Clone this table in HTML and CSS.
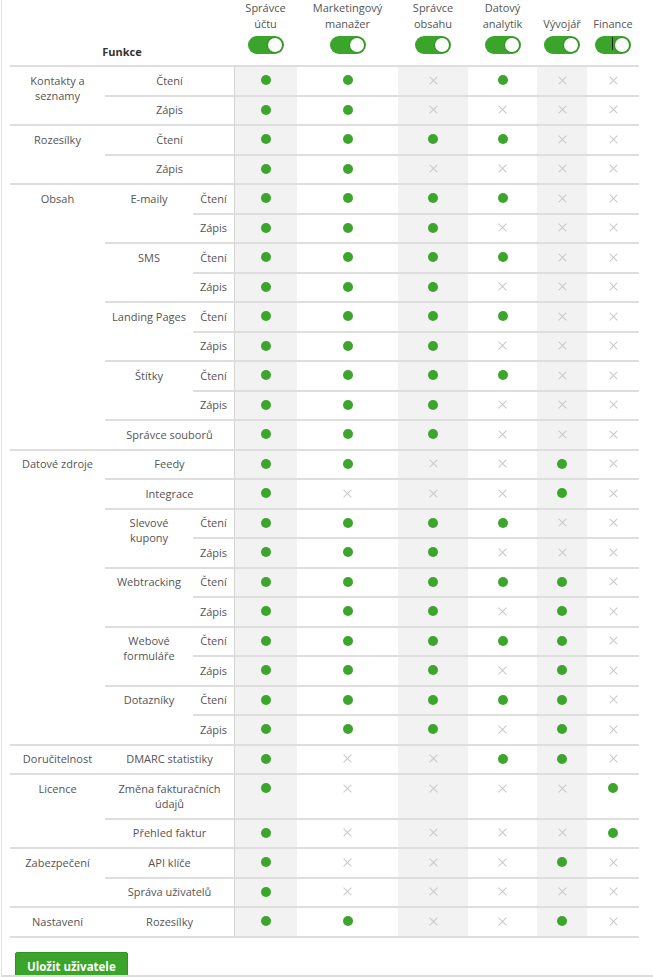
FILE: index.html
```html
<!DOCTYPE html>
<html lang="cs">
<head>
<meta charset="utf-8">
<title>Oprávnění rolí</title>
<link rel="stylesheet" href="styles.css">
</head>
<body>
<div class="page">
<table class="perm">
<colgroup>
<col class="w-grp"><col class="w-sub"><col class="w-act">
<col class="w-1"><col class="w-2"><col class="w-3"><col class="w-4"><col class="w-5"><col class="w-6">
</colgroup>
<thead>
<tr>
<th colspan="3" class="fn">Funkce</th>
<th><div class="role">Správce<br>účtu</div><span class="tg"><span class="kn"></span></span></th>
<th><div class="role">Marketingový<br>manažer</div><span class="tg"><span class="kn"></span></span></th>
<th><div class="role">Správce<br>obsahu</div><span class="tg"><span class="kn"></span></span></th>
<th><div class="role">Datový<br>analytik</div><span class="tg"><span class="kn"></span></span></th>
<th><div class="role">Vývojář</div><span class="tg"><span class="kn"></span></span></th>
<th><div class="role">Finance</div><span class="tg"><span class="kn"></span><span class="caret"></span></span></th>
</tr>
</thead>
<tbody>
<tr><td class="grp" rowspan="2">Kontakty a<br>seznamy</td><td class="sub" colspan="2">Čtení</td><td class="d d1"><i class="y"></i></td><td class="d d2"><i class="y"></i></td><td class="d d3"><i class="n"></i></td><td class="d d4"><i class="y"></i></td><td class="d d5"><i class="n"></i></td><td class="d d6"><i class="n"></i></td></tr>
<tr><td class="sub" colspan="2">Zápis</td><td class="d d1"><i class="y"></i></td><td class="d d2"><i class="y"></i></td><td class="d d3"><i class="n"></i></td><td class="d d4"><i class="n"></i></td><td class="d d5"><i class="n"></i></td><td class="d d6"><i class="n"></i></td></tr>

<tr><td class="grp" rowspan="2">Rozesílky</td><td class="sub" colspan="2">Čtení</td><td class="d d1"><i class="y"></i></td><td class="d d2"><i class="y"></i></td><td class="d d3"><i class="y"></i></td><td class="d d4"><i class="y"></i></td><td class="d d5"><i class="n"></i></td><td class="d d6"><i class="n"></i></td></tr>
<tr><td class="sub" colspan="2">Zápis</td><td class="d d1"><i class="y"></i></td><td class="d d2"><i class="y"></i></td><td class="d d3"><i class="n"></i></td><td class="d d4"><i class="n"></i></td><td class="d d5"><i class="n"></i></td><td class="d d6"><i class="n"></i></td></tr>

<tr><td class="grp" rowspan="9">Obsah</td><td class="sub" rowspan="2">E-maily</td><td class="act">Čtení</td><td class="d d1"><i class="y"></i></td><td class="d d2"><i class="y"></i></td><td class="d d3"><i class="y"></i></td><td class="d d4"><i class="y"></i></td><td class="d d5"><i class="n"></i></td><td class="d d6"><i class="n"></i></td></tr>
<tr><td class="act">Zápis</td><td class="d d1"><i class="y"></i></td><td class="d d2"><i class="y"></i></td><td class="d d3"><i class="y"></i></td><td class="d d4"><i class="n"></i></td><td class="d d5"><i class="n"></i></td><td class="d d6"><i class="n"></i></td></tr>
<tr><td class="sub" rowspan="2">SMS</td><td class="act">Čtení</td><td class="d d1"><i class="y"></i></td><td class="d d2"><i class="y"></i></td><td class="d d3"><i class="y"></i></td><td class="d d4"><i class="y"></i></td><td class="d d5"><i class="n"></i></td><td class="d d6"><i class="n"></i></td></tr>
<tr><td class="act">Zápis</td><td class="d d1"><i class="y"></i></td><td class="d d2"><i class="y"></i></td><td class="d d3"><i class="y"></i></td><td class="d d4"><i class="n"></i></td><td class="d d5"><i class="n"></i></td><td class="d d6"><i class="n"></i></td></tr>
<tr><td class="sub" rowspan="2">Landing Pages</td><td class="act">Čtení</td><td class="d d1"><i class="y"></i></td><td class="d d2"><i class="y"></i></td><td class="d d3"><i class="y"></i></td><td class="d d4"><i class="y"></i></td><td class="d d5"><i class="n"></i></td><td class="d d6"><i class="n"></i></td></tr>
<tr><td class="act">Zápis</td><td class="d d1"><i class="y"></i></td><td class="d d2"><i class="y"></i></td><td class="d d3"><i class="y"></i></td><td class="d d4"><i class="n"></i></td><td class="d d5"><i class="n"></i></td><td class="d d6"><i class="n"></i></td></tr>
<tr><td class="sub" rowspan="2">Štítky</td><td class="act">Čtení</td><td class="d d1"><i class="y"></i></td><td class="d d2"><i class="y"></i></td><td class="d d3"><i class="y"></i></td><td class="d d4"><i class="y"></i></td><td class="d d5"><i class="n"></i></td><td class="d d6"><i class="n"></i></td></tr>
<tr><td class="act">Zápis</td><td class="d d1"><i class="y"></i></td><td class="d d2"><i class="y"></i></td><td class="d d3"><i class="y"></i></td><td class="d d4"><i class="n"></i></td><td class="d d5"><i class="n"></i></td><td class="d d6"><i class="n"></i></td></tr>
<tr><td class="sub" colspan="2">Správce souborů</td><td class="d d1"><i class="y"></i></td><td class="d d2"><i class="y"></i></td><td class="d d3"><i class="y"></i></td><td class="d d4"><i class="n"></i></td><td class="d d5"><i class="n"></i></td><td class="d d6"><i class="n"></i></td></tr>

<tr><td class="grp" rowspan="10">Datové zdroje</td><td class="sub" colspan="2">Feedy</td><td class="d d1"><i class="y"></i></td><td class="d d2"><i class="y"></i></td><td class="d d3"><i class="n"></i></td><td class="d d4"><i class="n"></i></td><td class="d d5"><i class="y"></i></td><td class="d d6"><i class="n"></i></td></tr>
<tr><td class="sub" colspan="2">Integrace</td><td class="d d1"><i class="y"></i></td><td class="d d2"><i class="n"></i></td><td class="d d3"><i class="n"></i></td><td class="d d4"><i class="n"></i></td><td class="d d5"><i class="y"></i></td><td class="d d6"><i class="n"></i></td></tr>
<tr><td class="sub" rowspan="2">Slevové<br>kupony</td><td class="act">Čtení</td><td class="d d1"><i class="y"></i></td><td class="d d2"><i class="y"></i></td><td class="d d3"><i class="y"></i></td><td class="d d4"><i class="y"></i></td><td class="d d5"><i class="n"></i></td><td class="d d6"><i class="n"></i></td></tr>
<tr><td class="act">Zápis</td><td class="d d1"><i class="y"></i></td><td class="d d2"><i class="y"></i></td><td class="d d3"><i class="y"></i></td><td class="d d4"><i class="n"></i></td><td class="d d5"><i class="n"></i></td><td class="d d6"><i class="n"></i></td></tr>
<tr><td class="sub" rowspan="2">Webtracking</td><td class="act">Čtení</td><td class="d d1"><i class="y"></i></td><td class="d d2"><i class="y"></i></td><td class="d d3"><i class="y"></i></td><td class="d d4"><i class="y"></i></td><td class="d d5"><i class="y"></i></td><td class="d d6"><i class="n"></i></td></tr>
<tr><td class="act">Zápis</td><td class="d d1"><i class="y"></i></td><td class="d d2"><i class="y"></i></td><td class="d d3"><i class="y"></i></td><td class="d d4"><i class="n"></i></td><td class="d d5"><i class="y"></i></td><td class="d d6"><i class="n"></i></td></tr>
<tr><td class="sub" rowspan="2">Webové<br>formuláře</td><td class="act">Čtení</td><td class="d d1"><i class="y"></i></td><td class="d d2"><i class="y"></i></td><td class="d d3"><i class="y"></i></td><td class="d d4"><i class="y"></i></td><td class="d d5"><i class="y"></i></td><td class="d d6"><i class="n"></i></td></tr>
<tr><td class="act">Zápis</td><td class="d d1"><i class="y"></i></td><td class="d d2"><i class="y"></i></td><td class="d d3"><i class="y"></i></td><td class="d d4"><i class="n"></i></td><td class="d d5"><i class="y"></i></td><td class="d d6"><i class="n"></i></td></tr>
<tr><td class="sub" rowspan="2">Dotazníky</td><td class="act">Čtení</td><td class="d d1"><i class="y"></i></td><td class="d d2"><i class="y"></i></td><td class="d d3"><i class="y"></i></td><td class="d d4"><i class="y"></i></td><td class="d d5"><i class="y"></i></td><td class="d d6"><i class="n"></i></td></tr>
<tr><td class="act">Zápis</td><td class="d d1"><i class="y"></i></td><td class="d d2"><i class="y"></i></td><td class="d d3"><i class="y"></i></td><td class="d d4"><i class="n"></i></td><td class="d d5"><i class="y"></i></td><td class="d d6"><i class="n"></i></td></tr>

<tr><td class="grp">Doručitelnost</td><td class="sub" colspan="2">DMARC statistiky</td><td class="d d1"><i class="y"></i></td><td class="d d2"><i class="n"></i></td><td class="d d3"><i class="n"></i></td><td class="d d4"><i class="y"></i></td><td class="d d5"><i class="y"></i></td><td class="d d6"><i class="n"></i></td></tr>

<tr><td class="grp" rowspan="2">Licence</td><td class="sub" colspan="2">Změna fakturačních<br>údajů</td><td class="d d1"><i class="y"></i></td><td class="d d2"><i class="n"></i></td><td class="d d3"><i class="n"></i></td><td class="d d4"><i class="n"></i></td><td class="d d5"><i class="n"></i></td><td class="d d6"><i class="y"></i></td></tr>
<tr><td class="sub" colspan="2">Přehled faktur</td><td class="d d1"><i class="y"></i></td><td class="d d2"><i class="n"></i></td><td class="d d3"><i class="n"></i></td><td class="d d4"><i class="n"></i></td><td class="d d5"><i class="n"></i></td><td class="d d6"><i class="y"></i></td></tr>

<tr><td class="grp" rowspan="2">Zabezpečení</td><td class="sub" colspan="2">API klíče</td><td class="d d1"><i class="y"></i></td><td class="d d2"><i class="n"></i></td><td class="d d3"><i class="n"></i></td><td class="d d4"><i class="n"></i></td><td class="d d5"><i class="y"></i></td><td class="d d6"><i class="n"></i></td></tr>
<tr><td class="sub" colspan="2">Správa uživatelů</td><td class="d d1"><i class="y"></i></td><td class="d d2"><i class="n"></i></td><td class="d d3"><i class="n"></i></td><td class="d d4"><i class="n"></i></td><td class="d d5"><i class="n"></i></td><td class="d d6"><i class="n"></i></td></tr>

<tr><td class="grp">Nastavení</td><td class="sub" colspan="2">Rozesílky</td><td class="d d1"><i class="y"></i></td><td class="d d2"><i class="y"></i></td><td class="d d3"><i class="n"></i></td><td class="d d4"><i class="n"></i></td><td class="d d5"><i class="y"></i></td><td class="d d6"><i class="n"></i></td></tr>
</tbody>
</table>
<button class="save" type="button">Uložit uživatele</button>
</div>
</body>
</html>
```
FILE: styles.css
```css
html, body {
  margin: 0;
  padding: 0;
  background: #fff;
}

body {
  font-family: "Open Sans", "Noto Sans", "Liberation Sans", sans-serif;
  font-size: 11px;
  color: #555;
}

.page {
  margin-left: 1px;
  border-left: 1px solid #e2e2e2;
  border-bottom: 2px solid #dcdcdc;
  padding-left: 8px;
  box-sizing: border-box;
  height: 977px;
  overflow: hidden;
}

.perm {
  border-collapse: separate;
  border-spacing: 0;
  table-layout: fixed;
  width: 629px;
  border-bottom: 2px solid #dedede;
}

.w-grp { width: 95px; }
.w-sub { width: 88px; }
.w-act { width: 41px; }
.w-1 { width: 63px; }
.w-2 { width: 101px; }
.w-3 { width: 70px; }
.w-4 { width: 69px; }
.w-5 { width: 50px; }
.w-6 { width: 52px; }

.perm th {
  height: 54px;
  padding: 0 0 11px;
  vertical-align: bottom;
  font-weight: normal;
  text-align: center;
  line-height: 16px;
  color: #555;
}

.perm th.fn {
  padding-bottom: 5px;
  font-weight: bold;
  color: #333;
}

.role {
  white-space: nowrap;
}

.tg {
  position: relative;
  display: block;
  width: 36px;
  height: 18px;
  margin: 4px auto 0;
  border-radius: 9px;
  background: #3aa52a;
}

.kn {
  position: absolute;
  top: 2px;
  right: 2px;
  width: 14px;
  height: 14px;
  border-radius: 50%;
  background: #fff;
  box-shadow: 0 0 0 1px rgba(0, 0, 0, 0.12);
}

.caret {
  position: absolute;
  top: 1px;
  left: 17px;
  width: 1px;
  height: 13px;
  background: #222;
}

.perm td {
  border-top: 2px solid #dedede;
  padding: 5.5px 2px 7px;
  line-height: 15px;
  vertical-align: top;
  text-align: center;
  color: #555;
}

.perm td.d {
  padding-left: 0;
  padding-right: 0;
}

.d1, .d3, .d5 {
  background: #f2f2f2;
}

.perm td.d1 {
  border-left: 1px solid #d4d4d4;
}

.y {
  display: block;
  width: 10px;
  height: 10px;
  margin: 2.5px auto;
  border-radius: 50%;
  background: #3ca52c;
}

.n {
  position: relative;
  display: block;
  width: 9px;
  height: 9px;
  margin: 3px auto;
}

.n::before,
.n::after {
  content: "";
  position: absolute;
  left: 4px;
  top: -1px;
  width: 1px;
  height: 11px;
  background: #c9c9c9;
  transform: rotate(45deg);
}

.n::after {
  transform: rotate(-45deg);
}

.save {
  display: block;
  margin: 14px 0 0 5px;
  padding: 6px 11px 10px;
  border: 1px solid #2f9422;
  border-radius: 2px;
  background: #3aa52a;
  color: #fff;
  font-family: "Open Sans", "Noto Sans", "Liberation Sans", sans-serif;
  font-size: 11.5px;
  font-weight: bold;
  line-height: 16px;
}
```
